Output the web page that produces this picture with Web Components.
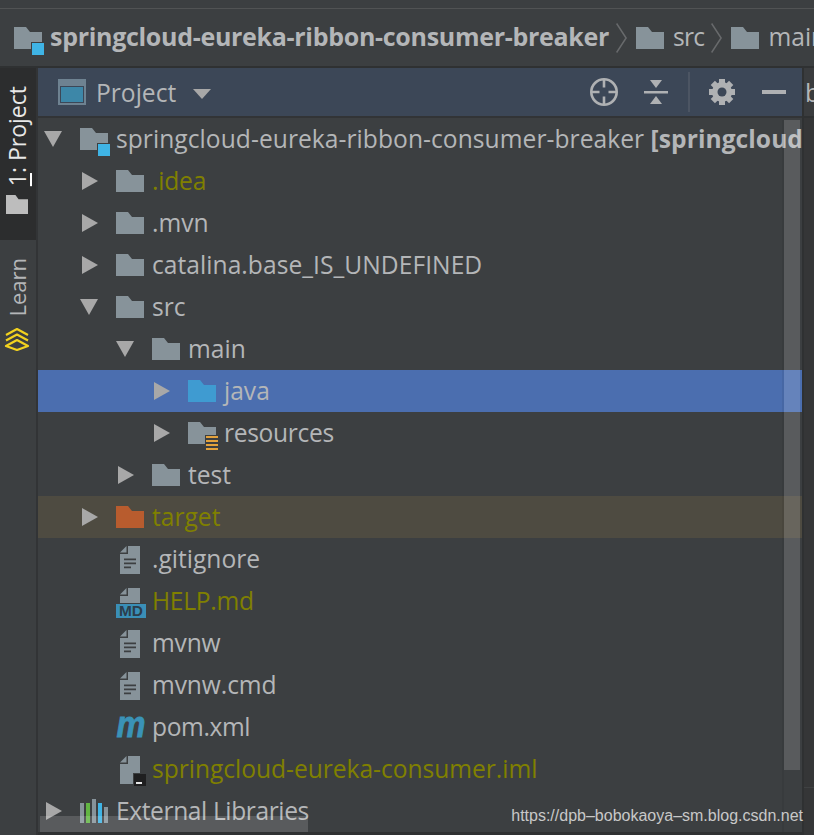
<!DOCTYPE html>
<html>
<head>
<meta charset="utf-8">
<style>
html, body { margin: 0; padding: 0; background: #3c3f41; }
body { width: 814px; height: 835px; overflow: hidden; font-family: "Open Sans", "Noto Sans", sans-serif; }
</style>
</head>
<body>
<ide-window>
    <nav-bar slot="nav"></nav-bar>
    <tool-strip slot="strip"></tool-strip>
    <project-panel slot="panel">
        <tree-row depth="0" arrow="down" icon="module" label="springcloud-eureka-ribbon-consumer-breaker" extra="[springcloud" track="0.05"></tree-row>
        <tree-row depth="1" arrow="right" icon="folder" label=".idea" tone="olive" track="-0.2"></tree-row>
        <tree-row depth="1" arrow="right" icon="folder" label=".mvn"></tree-row>
        <tree-row depth="1" arrow="right" icon="folder" label="catalina.base_IS_UNDEFINED" track="0.04"></tree-row>
        <tree-row depth="1" arrow="down" icon="folder" label="src"></tree-row>
        <tree-row depth="2" arrow="down" icon="folder" label="main"></tree-row>
        <tree-row depth="3" arrow="right" icon="source" label="java" selected></tree-row>
        <tree-row depth="3" arrow="right" icon="resources" label="resources" track="-0.33"></tree-row>
        <tree-row depth="2" arrow="right" icon="folder" label="test"></tree-row>
        <tree-row depth="1" arrow="right" icon="excluded" label="target" tone="olive" excluded></tree-row>
        <tree-row depth="1" icon="text" label=".gitignore" file></tree-row>
        <tree-row depth="1" icon="md" label="HELP.md" tone="olive" file track="-0.28"></tree-row>
        <tree-row depth="1" icon="text" label="mvnw" file track="-0.2"></tree-row>
        <tree-row depth="1" icon="text" label="mvnw.cmd" file track="-0.1"></tree-row>
        <tree-row depth="1" icon="maven" label="pom.xml" file track="-0.4"></tree-row>
        <tree-row depth="1" icon="iml" label="springcloud-eureka-consumer.iml" tone="olive" file track="-0.03"></tree-row>
        <tree-row depth="0" arrow="right" icon="libs" label="External Libraries" track="-0.4"></tree-row>
    </project-panel>
</ide-window>

<script>
const BG = "#3c3f41";

// folder shape shared by the nav bar, the tree and the tool strip
function folderSvg(color, w = 28, h = 22) {
    return `<svg width="${w}" height="${h}" viewBox="0 0 28 22" preserveAspectRatio="none"><path d="M0 0h12l4 5h12v17H0z" fill="${color}"/></svg>`;
}

const FOLD = `<path d="M0 6.500L6.500 0v6.500z" fill="#87939a"/>`;

const ICONS = {
    folder: folderSvg("#87939a"),
    source: folderSvg("#3f9bd1"),
    excluded: folderSvg("#b85c2e"),
    // badges hang out of the 28x22 folder box
    module: `<svg width="28" height="22" viewBox="0 0 28 22" overflow="visible"><path d="M0 0h12l4 5h12v17H0z" fill="#87939a"/><rect x="17" y="15" width="14" height="14" fill="${BG}"/><rect x="18" y="16" width="12" height="12" fill="#3fb4e5"/></svg>`,
    resources: `<svg width="28" height="22" viewBox="0 0 28 22" overflow="visible"><path d="M0 0h12l4 5h12v8H17v9H0z" fill="#87939a"/><path d="M18 14h12v2H18zM18 18h12v2H18zM18 22h12v2H18zM18 26h12v2H18z" fill="#e3a23c"/></svg>`,
    text: `<svg class="page" width="20" height="28" viewBox="0 0 20 28"><path fill-rule="evenodd" d="M8 0h12v28H0V8h8zM4 12.500v1.700h12v-1.700zM4 16.500v1.700h12v-1.700zM4 20.500v1.700h7v-1.700z" fill="#87939a"/>${FOLD}</svg>`,
    md: `<svg class="badge" width="30" height="30" viewBox="0 0 30 30"><path d="M12 0h12v15H4V8h8z" fill="#87939a"/><path d="M4 6.500L10.500 0v6.500z" fill="#87939a"/><rect y="16" width="30" height="14" fill="#3a8fb7"/><text x="15" y="28" text-anchor="middle" font-family="Liberation Sans, sans-serif" font-weight="700" font-size="14" textLength="24" lengthAdjust="spacingAndGlyphs" fill="#2c3e4c">MD</text></svg>`,
    maven: `<svg width="30" height="30" viewBox="0 0 30 30"><text x="15" y="25" text-anchor="middle" font-family="Liberation Sans, sans-serif" font-weight="700" font-style="italic" font-size="37" textLength="29" lengthAdjust="spacingAndGlyphs" fill="#3a93b7" stroke="#3a93b7" stroke-width=".8">m</text></svg>`,
    iml: `<svg class="page" width="20" height="28" viewBox="0 0 20 28" overflow="visible"><path d="M8 0h12v17h-7v11H0V8h8z" fill="#87939a"/>${FOLD}<rect x="14" y="18" width="12" height="12" fill="#1f1f20"/><rect x="16" y="26" width="6" height="2" fill="#e6e6e6"/></svg>`,
    libs: `<svg width="28" height="24" viewBox="0 0 28 24"><rect x="0" y="4" width="4" height="20" fill="#87939a"/><rect x="6" y="4" width="4" height="20" fill="#62b543"/><rect x="12" y="0" width="4" height="24" fill="#87939a"/><rect x="18" y="4" width="4" height="20" fill="#3fb4e5"/><rect x="24" y="8" width="4" height="16" fill="#87939a"/></svg>`
};

class IdeWindow extends HTMLElement {
    constructor() {
        super();
        this.attachShadow({mode: 'open'}).innerHTML = `
<style>
:host { display: flex; flex-direction: column; width: 814px; height: 835px; background: ${BG}; color: #bbbbbb; overflow: hidden; }
.top { height: 8px; background: ${BG}; border-bottom: 1px solid #515354; flex: none; }
.body { flex: 1; display: flex; min-height: 0; border-top: 2px solid #2f3132; }
.side { width: 12px; flex: none; background: #353637; border-left: 2px solid #2f3132; box-sizing: border-box; }
.tab { height: 48px; border-bottom: 2px solid #2f3132; background: #3a3c3e; display: flex; align-items: center; padding-left: 1px; overflow: hidden; font-size: 25px; color: #b4b6b8; }
.rule { height: 669px; border-bottom: 1px solid #3f4142; }
</style>
<div class="top"></div>
<slot name="nav"></slot>
<div class="body">
    <slot name="strip"></slot>
    <slot name="panel"></slot>
    <div class="side"><div class="tab">b</div><div class="rule"></div></div>
</div>`;
    }
}
customElements.define("ide-window", IdeWindow);

class NavBar extends HTMLElement {
    constructor() {
        super();
        let chevron = `<svg class="chev" width="11" height="30" viewBox="0 0 11 30"><path d="M.6 .5l9.500 14.500L.6 29.500" fill="none" stroke="#686a6c" stroke-width="1.500"/></svg>`;
        this.attachShadow({mode: 'open'}).innerHTML = `
<style>
:host { display: flex; align-items: center; height: 57px; flex: none; padding-left: 14px; white-space: nowrap; overflow: hidden; font-size: 24.600px; color: #b4b6b8; }
.module { font-weight: 700; font-size: 25px; margin-left: 8px; letter-spacing: -0.3px; margin-top: -3px; }
.chev { margin: 0 9px 0 7px; flex: none; }
.label { margin-left: 9px; margin-top: -3px; }
.src { letter-spacing: -0.7px; }
svg { flex: none; }
.ico { width: 28px; height: 22px; display: block; flex: none; }
</style>
<svg class="ico" viewBox="0 0 28 22" overflow="visible"><path d="M0 0h12l4 5h12v17H0z" fill="#87939a"/><rect x="17" y="15" width="14" height="14" fill="${BG}"/><rect x="18" y="16" width="12" height="12" fill="#3fb4e5"/></svg>
<span class="module">springcloud-eureka-ribbon-consumer-breaker</span>
${chevron}
${folderSvg("#87939a")}<span class="label src">src</span>
${chevron}
${folderSvg("#87939a")}<span class="label">main</span>`;
    }
}
customElements.define("nav-bar", NavBar);

class ToolStrip extends HTMLElement {
    constructor() {
        super();
        this.attachShadow({mode: 'open'}).innerHTML = `
<style>
:host { display: flex; flex-direction: column; width: 36px; flex: none; background: ${BG}; border-right: 2px solid #323436; }
.tab { display: flex; flex-direction: column; align-items: center; padding-right: 2px; box-sizing: border-box; }
.active { background: #2c2d2e; height: 172px; color: #e8e8e8; padding-top: 18px; gap: 9px; }
.learn { padding-top: 18px; gap: 10px; color: #b4b6b8; }
.label { writing-mode: vertical-rl; transform: rotate(180deg); font-size: 22px; line-height: 30px; }
.active .label { font-size: 23px; }
u { text-underline-offset: 1px; text-decoration-thickness: 2px; text-decoration-color: #fff; }
</style>
<div class="tab active">
    <div class="label"><u>1</u>: Project</div>
    ${folderSvg("#bdbdbd", 22, 19)}
</div>
<div class="tab learn">
    <div class="label">Learn</div>
    <svg width="26" height="24" viewBox="0 0 26 24"><path d="M2 8L13 2l11 6M2 13.500L13 7.500l11 6M2 19L13 13l11 6-11 4z" fill="none" stroke="#f2d21f" stroke-width="2.200" stroke-linejoin="round"/></svg>
</div>`;
    }
}
customElements.define("tool-strip", ToolStrip);

class ProjectPanel extends HTMLElement {
    constructor() {
        super();
        let teeth = [0, 45, 90, 135].map(a => `<rect x="10" y="0" width="6" height="26" fill="#afb1b3" transform="rotate(${a} 13 13)"/>`).join("");
        this.attachShadow({mode: 'open'}).innerHTML = `
<style>
:host { display: flex; flex-direction: column; flex: 1; min-width: 0; position: relative; }
.head { display: flex; align-items: center; height: 48px; flex: none; background: #3c4757; border-bottom: 2px solid #323436; padding-left: 20px; font-size: 24.600px; color: #b4b6b8; }
.title { margin-left: 10px; margin-top: 1px; }
.caret { margin: 4px 0 0 17px; }
.tools { margin-left: auto; display: flex; align-items: center; padding-right: 16px; }
.tools svg { display: block; }
.sep { width: 2px; height: 40px; background: #4c5563; margin: 0 19px 0 20px; }
.tree { display: flex; flex-direction: column; flex: none; }
.foot { flex: 1; background: #2f3132; }
.line-v { position: absolute; left: 744px; top: 52px; bottom: 3px; width: 2px; background: rgba(0,0,0,.06); }
.thumb-v { position: absolute; left: 746px; top: 52px; width: 16px; height: 650px; background: rgba(255,255,255,.15); }
.thumb-h { position: absolute; left: 2px; top: 748px; width: 268px; height: 16px; background: rgba(255,255,255,.15); }
.mark { position: absolute; right: -1px; top: 739px; font: 16px "Liberation Sans", sans-serif; color: #c8c8c8; white-space: nowrap; }
</style>
<div class="head">
    <svg width="28" height="26" viewBox="0 0 28 26"><path fill-rule="evenodd" d="M0 0h28v26H0zM2 7v17h24V7z" fill="#6e8291"/><rect x="3" y="8" width="22" height="15" fill="#3d87a8"/></svg>
    <span class="title">Project</span>
    <svg class="caret" width="18" height="10" viewBox="0 0 18 10"><path d="M0 0h18L9 10z" fill="#a8a8a8"/></svg>
    <div class="tools">
        <svg width="28" height="28" viewBox="0 0 28 28"><circle cx="14" cy="14" r="12.700" fill="none" stroke="#afb1b3" stroke-width="2.600"/><path d="M14 2v7.500M14 18.500V26M2 14h7.500M18.500 14H26" stroke="#afb1b3" stroke-width="2.600"/></svg>
        <svg style="margin-left:26px" width="24" height="26" viewBox="0 0 24 26"><path d="M0 12h24v2.500H0zM6 1h12l-6 8zM6 25h12l-6-8z" fill="#afb1b3"/></svg>
        <div class="sep"></div>
        <svg width="26" height="26" viewBox="0 0 26 26">${teeth}<circle cx="13" cy="13" r="10" fill="#afb1b3"/><circle cx="13" cy="13" r="4.500" fill="#3c4757"/></svg>
        <svg style="margin-left:27px" width="24" height="4" viewBox="0 0 24 4"><rect width="24" height="4" fill="#afb1b3"/></svg>
    </div>
</div>
<div class="tree"><slot></slot></div>
<div class="foot"></div>
<div class="line-v"></div>
<div class="thumb-v"></div>
<div class="thumb-h"></div>
<div class="mark">https://dpb&#8211;bobokaoya&#8211;sm.blog.csdn.net</div>`;
    }
}
customElements.define("project-panel", ProjectPanel);

class TreeRow extends HTMLElement {
    constructor() {
        super();
        let depth = Number(this.getAttribute("depth"));
        let arrow = this.getAttribute("arrow");
        let icon = ICONS[this.getAttribute("icon")];
        let tri = "";
        if (arrow === "right") {
            tri = `<svg width="16" height="18" viewBox="0 0 16 18"><path d="M0 0l16 9L0 18z" fill="#a8a8a8"/></svg>`;
        } else if (arrow === "down") {
            tri = `<svg width="18" height="16" viewBox="0 0 18 16"><path d="M0 0h18L9 16z" fill="#a8a8a8"/></svg>`;
        }
        let extra = this.getAttribute("extra");
        let track = this.getAttribute("track") || 0;
        this.attachShadow({mode: 'open'}).innerHTML = `
<style>
:host { display: flex; align-items: center; height: 42px; flex: none; white-space: nowrap; overflow: hidden; font-size: 24.600px; color: #b4b6b8; padding-left: ${6 + depth * 36}px; }
:host([selected]) { background: #4b6eaf; }
:host([excluded]) { background: #4e4b41; }
:host([tone=olive]) .text { color: #808000; }
.arrow { width: 18px; flex: none; display: flex; justify-content: flex-end; }
.icon { width: 36px; height: 30px; flex: none; margin-left: 18px; display: flex; align-items: center; }
svg { overflow: visible; }
.page { margin: 2px 0 0 4px; }
.badge { margin-top: 4px; }
.text { margin-top: -2px; letter-spacing: ${track}px; }
b { font-weight: 700; }
</style>
<div class="arrow">${tri}</div>
<div class="icon">${icon}</div>
<span class="text">${this.getAttribute("label")}${extra ? ` <b>${extra}</b>` : ""}</span>`;
    }
}
customElements.define("tree-row", TreeRow);
</script>
</body>
</html>
